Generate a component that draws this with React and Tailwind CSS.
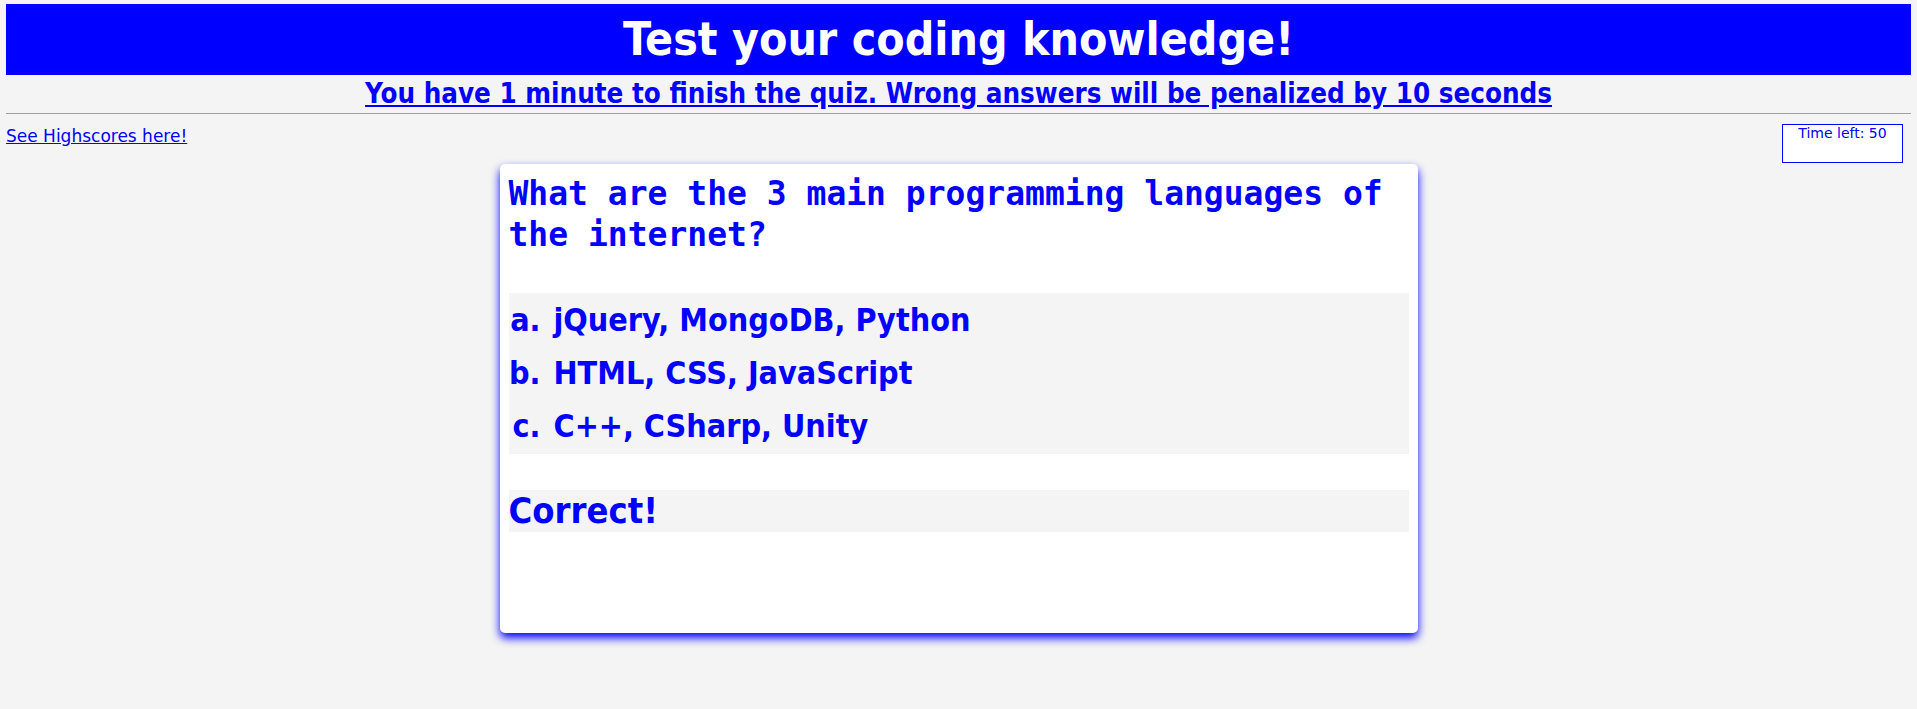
import React from "react";

const options = [
  "jQuery, MongoDB, Python",
  "HTML, CSS, JavaScript",
  "C++, CSharp, Unity",
];

function App() {
  return (
    <div
      className="min-h-screen bg-[#f4f4f4] px-[6px] pt-[4px] text-[#0000ff]"
      style={{ fontFamily: '"DejaVu Sans Condensed", "DejaVu Sans", sans-serif' }}
    >
      {/* header */}
      <header className="text-center">
        <h1 className="h-[71px] bg-[#0000ff] text-[46px] font-bold leading-[71px] text-white">
          Test your coding knowledge!
        </h1>
        <a href="#" className="inline-block text-[27.5px] font-bold leading-[36px] underline">
          You have 1 minute to finish the quiz. Wrong answers will be penalized by 10 seconds
        </a>
      </header>
      <hr className="mt-[2px] border-t border-[#a0a0a0]" />

      {/* scores + timer */}
      <div className="flex items-start justify-between">
        <a
          href="#"
          className="mt-[12px] text-[17px] leading-[20px] underline"
          style={{ fontFamily: '"DejaVu Sans", sans-serif' }}
        >
          See Highscores here!
        </a>
        <div
          className="mr-[8px] mt-[10px] h-[39px] w-[121px] border border-[#0000ff] bg-white text-center text-[14px] leading-[17px]"
          style={{ fontFamily: '"DejaVu Sans", sans-serif' }}
        >
          Time left: 50
        </div>
      </div>

      {/* quiz card */}
      <div className="mx-auto mt-[1px] h-[469px] w-[918px] rounded-[5px] bg-white px-[9px] pt-[9px] shadow-[0_5px_10px_#0000ff]">
        <h2
          className="text-[33px] font-bold leading-[41px]"
          style={{ fontFamily: '"DejaVu Sans Mono", "Liberation Mono", monospace' }}
        >
          What are the 3 main programming languages of the internet?
        </h2>
        <ol className="mt-[38px] list-[lower-alpha] bg-[#f4f4f4] py-[1px] pl-[42px] text-[32px] font-bold">
          {options.map((opt) => (
            <li key={opt} className="h-[53px] pl-[3px] leading-[53px]">
              {opt}
            </li>
          ))}
        </ol>
        <div className="mt-[36px] h-[42px] bg-[#f4f4f4] text-[36px] font-bold leading-[42px]">
          Correct!
        </div>
      </div>
    </div>
  );
}

export default App;
